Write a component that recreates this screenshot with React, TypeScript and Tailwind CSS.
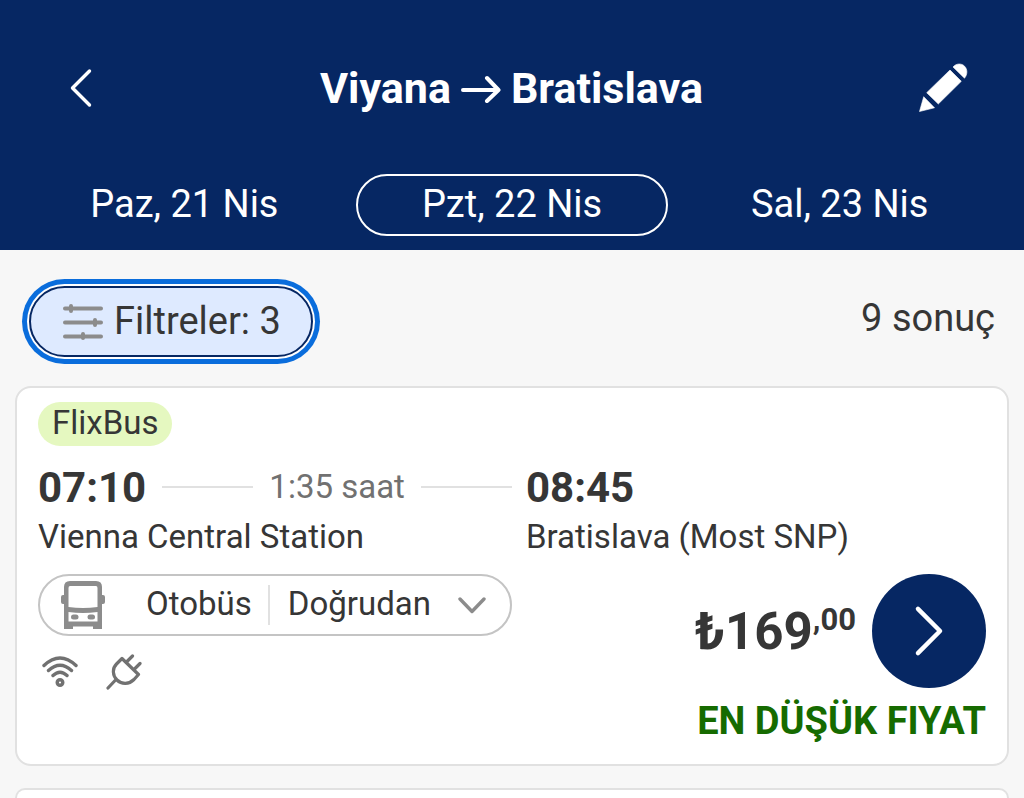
import type { ReactNode } from 'react';

type IconProps = { className?: string };

function ChevronIcon({ className }: IconProps) {
  return (
    <svg viewBox="0 0 24 40" className={className} fill="none" stroke="currentColor" strokeWidth="3.4" strokeLinecap="round" strokeLinejoin="round" aria-hidden="true">
      <path d="M20.500 3 3.500 20l17 17" />
    </svg>
  );
}

function ChevronDownIcon() {
  return (
    <svg viewBox="0 0 28 18" className="h-[18px] w-7 text-[#8c8c8c]" fill="none" stroke="currentColor" strokeWidth="3.4" strokeLinecap="round" strokeLinejoin="round" aria-hidden="true">
      <path d="M2 3l12 12.500L26 3" />
    </svg>
  );
}

function ArrowIcon() {
  return (
    <svg viewBox="0 0 40 30" className="h-[30px] w-10" fill="none" stroke="currentColor" strokeWidth="4" strokeLinecap="round" strokeLinejoin="round" aria-hidden="true">
      <path d="M2 17h35M26 5 37.500 17 26 28" />
    </svg>
  );
}

function PencilIcon() {
  return (
    <svg viewBox="0 0 50 50" className="size-[50px]" fill="currentColor" aria-hidden="true">
      <path d="M1.500 48.500 5.700 33.700 16.500 44.800zM8.700 29.700 32 7 43.300 18.300 20.300 41zM35 4C38 .3 43.500 0 46.600 3.200s3 8.400-.1 12z" stroke="currentColor" strokeWidth=".6" strokeLinejoin="round" />
    </svg>
  );
}

function SlidersIcon() {
  return (
    <svg viewBox="0 0 40 36" className="h-9 w-10 text-[#8c8c8c]" fill="none" stroke="currentColor" strokeWidth="4" strokeLinecap="round" aria-hidden="true">
      <path d="M2 4.500h36M2 18.500h36M2 32.500h36" />
      <path d="M8 2v5M32 16v5M20 30v4" />
    </svg>
  );
}

function BusIcon() {
  return (
    <svg viewBox="0 0 44 48" className="h-12 w-11 text-[#8c8c8c]" aria-hidden="true">
      <path fill="currentColor" fillRule="evenodd" d="M9 0h26q6 0 6 6v8h1q2 0 2 2v5q0 2-2 2h-1v25h-9v-2.500H12V48H3V23H2q-2 0-2-2v-5q0-2 2-2h1V6q0-6 6-6zm0 5Q7.500 5 7.500 7v19q14.500 2 29 0V7q0-2-1.500-2zM7.500 31v9.500h29V31q-14.500 2-29 0z" />
      <rect x="10" y="33.500" width="7.500" height="5" rx="2.500" fill="currentColor" />
      <rect x="26.500" y="33.500" width="7.500" height="5" rx="2.500" fill="currentColor" />
    </svg>
  );
}

function WifiIcon() {
  return (
    <svg viewBox="0 0 36 32" className="h-8 w-9" fill="none" stroke="currentColor" strokeWidth="3.4" strokeLinecap="round" role="img" aria-label="Wi-Fi">
      <path d="M2 9.500Q18-5.500 34 9.500M6.500 14.500Q18 4 29.500 14.500M11 19.500q7-6.500 14 0" />
      <circle cx="18" cy="26.500" r="2.800" />
    </svg>
  );
}

function PlugIcon() {
  return (
    <svg viewBox="0 0 36 36" className="size-9" fill="none" stroke="currentColor" strokeWidth="3.200" strokeLinecap="round" strokeLinejoin="round" role="img" aria-label="Priz">
      <path d="M2 34l8-8.500M16 4.500 32.500 20.500l-4.500 5c-5 5-12.500 5-17 .5s-5-11.500-.5-16zM21 7.500 26.500 2M28.500 15 34 9.500" />
    </svg>
  );
}

function DateTab({ children, active = false }: { children: ReactNode; active?: boolean }) {
  return (
    <button
      type="button"
      aria-pressed={active}
      className={
        active
          ? 'h-[62px] flex-1 rounded-full border-2 border-white pb-0.5 text-[38px] leading-none'
          : 'h-[62px] flex-1 rounded-full border-2 border-transparent pb-0.5 text-[38px] leading-none'
      }
    >
      {children}
    </button>
  );
}

function TripCard() {
  return (
    <article className="rounded-2xl border-2 border-[#e1e1e1] bg-white px-[21px] pt-3.5 pb-[18px]">
      <div className="flex">
        <span className="flex h-11 items-center rounded-full bg-[#e5f8c0] px-3.5 pb-1 text-[33px] leading-none">FlixBus</span>
      </div>

      <div className="mt-4 grid grid-cols-2">
        <div>
          <div className="flex h-[50px] items-center gap-4">
            <time className="pt-0.5 text-[42px] leading-none font-bold">07:10</time>
            <span className="h-0.5 flex-1 bg-[#e1e1e1]" />
            <span className="pb-0.5 text-[33px] leading-none text-[#717171]">1:35 saat</span>
            <span className="h-0.5 flex-1 bg-[#e1e1e1]" />
          </div>
          <p className="text-[33px] leading-[50px]">Vienna Central Station</p>
        </div>
        <div className="pl-3.5">
          <div className="flex h-[50px] items-center">
            <time className="pt-0.5 text-[42px] leading-none font-bold">08:45</time>
          </div>
          <p className="text-[33px] leading-[50px]">Bratislava (Most SNP)</p>
        </div>
      </div>

      <div className="mt-3 grid grid-cols-2">
        <div>
          <button type="button" className="flex h-[62px] w-full items-center rounded-full border-2 border-[#c4c4c4] pr-6 pl-[21px] text-[33px] leading-none">
            <BusIcon />
            <span className="ml-auto pb-1">Otobüs</span>
            <span className="mr-[18px] ml-4 h-10 w-0.5 bg-[#e1e1e1]" />
            <span className="mr-[27px] pb-1">Doğrudan</span>
            <ChevronDownIcon />
          </button>
          <div className="mt-[18px] flex items-center gap-7 pl-1 text-[#717171]">
            <WifiIcon />
            <PlugIcon />
          </div>
        </div>
        <div className="flex flex-col items-end">
          <div className="flex items-center gap-4">
            <p className="flex items-start pt-0.5 font-bold">
              <span className="text-[51px] leading-[60px]">₺169</span>
              <span className="text-[31px] leading-9">,00</span>
            </p>
            <button type="button" aria-label="Devam" className="flex size-[114px] items-center justify-center rounded-full bg-[#062763] text-white">
              <ChevronIcon className="h-[52px] w-8 rotate-180" />
            </button>
          </div>
          <p className="mt-2 text-[38px] leading-[50px] font-bold text-[#166b00]">EN DÜŞÜK FIYAT</p>
        </div>
      </div>
    </article>
  );
}

export default function App() {
  return (
    <div className="flex min-h-screen flex-col bg-[#f7f7f7] font-['Roboto','Liberation_Sans',sans-serif] text-[#363636]">
      <header className="bg-[#062763] px-7 pt-[58px] pb-3.5 text-white">
        <div className="flex h-[60px] items-center justify-between pr-7 pl-[41px]">
          <button type="button" aria-label="Geri" className="flex w-9 items-center">
            <ChevronIcon className="h-10 w-6" />
          </button>
          <h1 className="flex items-center gap-2.5 text-[43px] leading-none font-bold">
            Viyana <ArrowIcon /> Bratislava
          </h1>
          <button type="button" aria-label="Düzenle">
            <PencilIcon />
          </button>
        </div>
        <nav aria-label="Tarih" className="mt-14 flex gap-[15px]">
          <DateTab>Paz, 21 Nis</DateTab>
          <DateTab active>Pzt, 22 Nis</DateTab>
          <DateTab>Sal, 23 Nis</DateTab>
        </nav>
      </header>

      <main className="flex flex-1 flex-col px-[15px]">
        <div className="flex items-center justify-between px-3.5 pt-9 pb-[29px]">
          <button
            type="button"
            className="flex h-[71px] items-center gap-[11px] rounded-full border-2 border-[#062763] bg-[#deeaff] pr-[30px] pl-8 text-[38px] leading-none shadow-[0_0_0_2px_#ffffff,0_0_0_7px_#0a6ddc]"
          >
            <SlidersIcon />
            <span className="pb-0.5">Filtreler: 3</span>
          </button>
          <p className="pb-2 text-[38px] leading-none">9 sonuç</p>
        </div>
        <TripCard />
        <div className="mt-[22px] flex-1 rounded-t-2xl border-2 border-b-0 border-[#e1e1e1] bg-white" />
      </main>
    </div>
  );
}
